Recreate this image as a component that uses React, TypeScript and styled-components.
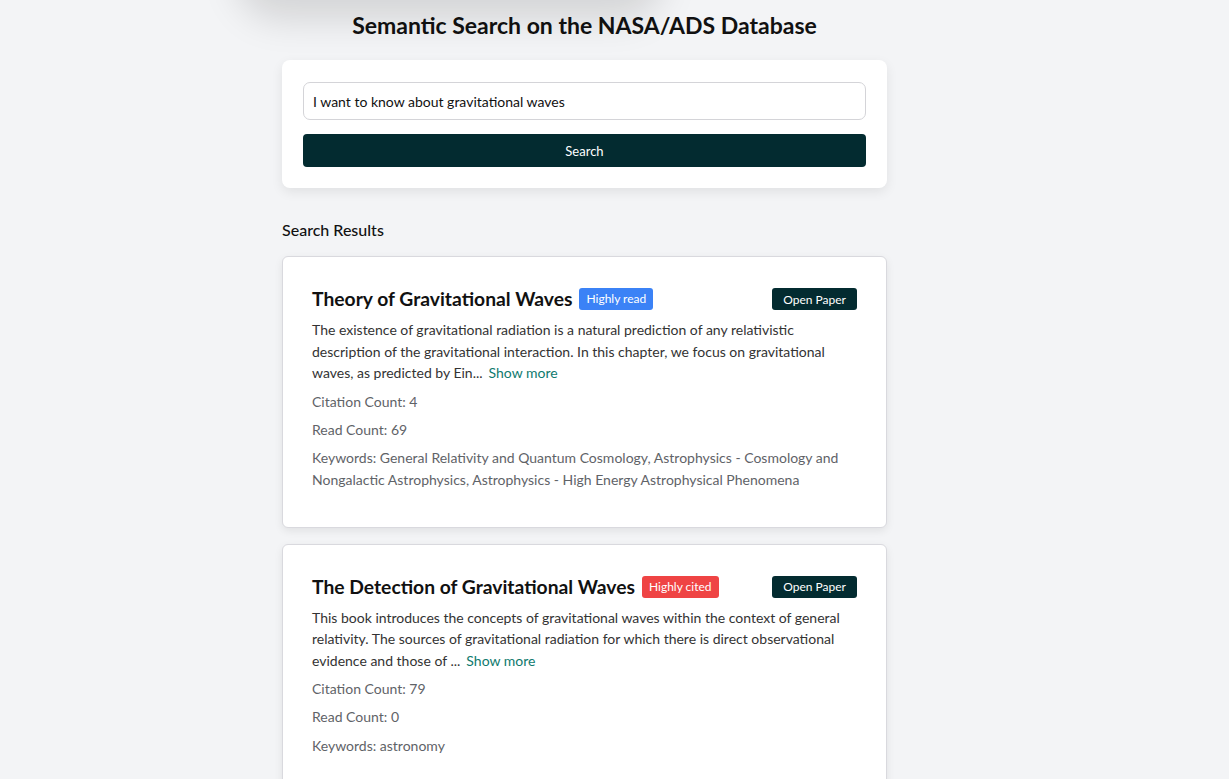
import React from "react";
import styled, { createGlobalStyle } from "styled-components";

const Global = createGlobalStyle`
  html, body { margin: 0; padding: 0; background: #f3f4f6; }
  body { font-family: "Lato", "Noto Sans", sans-serif; color: #111; }
  * { box-sizing: border-box; }
`;

const Page = styled.div`
  position: relative;
  min-height: 779px;
  padding: 11px 60px 0 0;
  overflow: hidden;
`;

const Glow = styled.div`
  position: absolute;
  left: 250px;
  top: -90px;
  width: 400px;
  height: 90px;
  border-radius: 30px;
  background: #f3f4f6;
  box-shadow: 0 6px 36px 14px rgba(0, 0, 0, 0.13);
`;

const Main = styled.main`
  width: 605px;
  margin: 0 auto;
  display: flex;
  flex-direction: column;
`;

const Title = styled.h1`
  margin: 0 0 21px;
  text-align: center;
  font-size: 23px;
  font-weight: 700;
  line-height: 28px;
  color: #111;
`;

const SearchCard = styled.form`
  background: #fff;
  border-radius: 8px;
  box-shadow: 0 4px 12px rgba(0, 0, 0, 0.08);
  padding: 22px 21px 21px;
  display: flex;
  flex-direction: column;
  gap: 14px;
`;

const Input = styled.input`
  height: 38px;
  border: 1px solid #d4d4d8;
  border-radius: 7px;
  padding: 0 9px;
  font-family: inherit;
  font-size: 14px;
  color: #111;
  outline: none;
`;

const DarkButton = styled.button<{ $small?: boolean }>`
  background: #032b30;
  color: #fff;
  border: none;
  border-radius: ${(p) => (p.$small ? "3px" : "4px")};
  font-family: inherit;
  font-size: ${(p) => (p.$small ? "12px" : "13px")};
  height: ${(p) => (p.$small ? "22px" : "33px")};
  padding: ${(p) => (p.$small ? "0 11px" : "0")};
  cursor: pointer;
  white-space: nowrap;
`;

const SectionTitle = styled.h2`
  margin: 31px 0 15px;
  font-size: 16px;
  font-weight: 500;
  line-height: 22px;
  color: #111;
`;

const List = styled.div`
  display: flex;
  flex-direction: column;
  gap: 16px;
`;

const Card = styled.article`
  background: #fff;
  border: 1px solid #d9d9de;
  border-radius: 6px;
  box-shadow: 0 3px 8px rgba(0, 0, 0, 0.08);
  padding: 30px 29px 32px;
  display: flex;
  flex-direction: column;
`;

const Header = styled.div`
  display: flex;
  align-items: center;
  justify-content: space-between;
  margin-bottom: 8px;
`;

const TitleRow = styled.div`
  display: flex;
  align-items: center;
  gap: 7px;
`;

const PaperTitle = styled.h3`
  margin: 0;
  font-size: 19.3px;
  font-weight: 700;
  line-height: 24px;
  color: #111;
`;

const Badge = styled.span<{ $tone: "blue" | "red" }>`
  background: ${(p) => (p.$tone === "blue" ? "#3b82f6" : "#ef4444")};
  color: #fff;
  font-size: 12px;
  line-height: 22px;
  height: 22px;
  padding: 0 7px;
  border-radius: 3px;
`;

const Abstract = styled.p`
  margin: 0 0 4px;
  font-size: 14px;
  line-height: 21.5px;
  color: #333;
`;

const ShowMore = styled.a`
  color: #0f7a6e;
  margin-left: 6px;
  text-decoration: none;
  cursor: pointer;
`;

const Meta = styled.p`
  margin: 0;
  padding: 3px 0;
  font-size: 14px;
  line-height: 22.3px;
  color: #5f6368;
`;

type Paper = {
  title: string;
  badge: string;
  tone: "blue" | "red";
  abstract: string;
  citations: number;
  reads: number;
  keywords: string;
};

const papers: Paper[] = [
  {
    title: "Theory of Gravitational Waves",
    badge: "Highly read",
    tone: "blue",
    abstract:
      "The existence of gravitational radiation is a natural prediction of any relativistic description of the gravitational interaction. In this chapter, we focus on gravitational waves, as predicted by Ein...",
    citations: 4,
    reads: 69,
    keywords:
      "General Relativity and Quantum Cosmology, Astrophysics - Cosmology and Nongalactic Astrophysics, Astrophysics - High Energy Astrophysical Phenomena",
  },
  {
    title: "The Detection of Gravitational Waves",
    badge: "Highly cited",
    tone: "red",
    abstract:
      "This book introduces the concepts of gravitational waves within the context of general relativity. The sources of gravitational radiation for which there is direct observational evidence and those of ...",
    citations: 79,
    reads: 0,
    keywords: "astronomy",
  },
];

export default function App() {
  return (
    <>
      <Global />
      <Page>
        <Glow />
        <Main>
          <Title>Semantic Search on the NASA/ADS Database</Title>
          <SearchCard onSubmit={(e) => e.preventDefault()}>
            <Input defaultValue="I want to know about gravitational waves" />
            <DarkButton type="submit">Search</DarkButton>
          </SearchCard>
          <SectionTitle>Search Results</SectionTitle>
          <List>
            {papers.map((p) => (
              <Card key={p.title}>
                <Header>
                  <TitleRow>
                    <PaperTitle>{p.title}</PaperTitle>
                    <Badge $tone={p.tone}>{p.badge}</Badge>
                  </TitleRow>
                  <DarkButton $small type="button">
                    Open Paper
                  </DarkButton>
                </Header>
                <Abstract>
                  {p.abstract}
                  <ShowMore>Show more</ShowMore>
                </Abstract>
                <Meta>Citation Count: {p.citations}</Meta>
                <Meta>Read Count: {p.reads}</Meta>
                <Meta>Keywords: {p.keywords}</Meta>
              </Card>
            ))}
          </List>
        </Main>
      </Page>
    </>
  );
}
